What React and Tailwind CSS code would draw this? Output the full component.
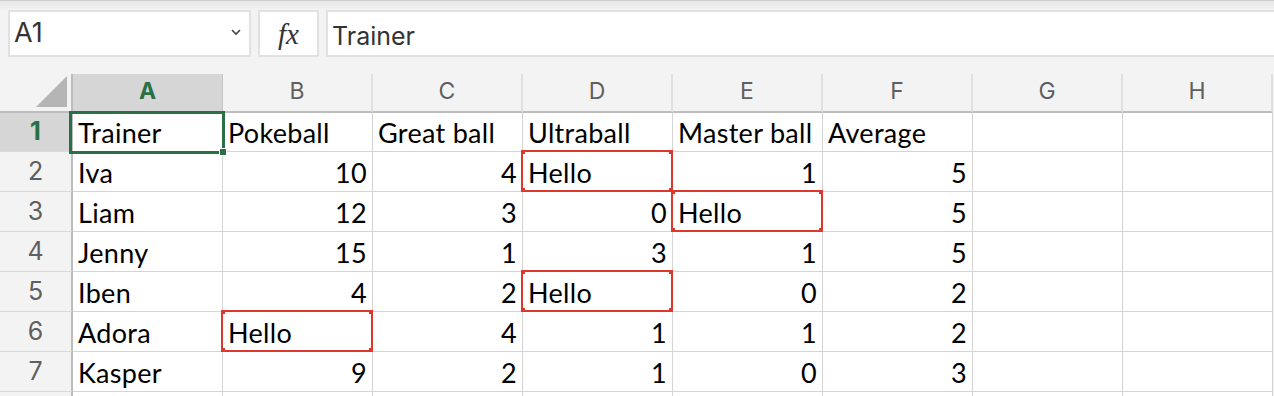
import React from "react";

const COLS = ["A", "B", "C", "D", "E", "F", "G", "H"];
const DATA = [
  ["Trainer", "Pokeball", "Great ball", "Ultraball", "Master ball", "Average", "", ""],
  ["Iva", 10, 4, "Hello", 1, 5, "", ""],
  ["Liam", 12, 3, 0, "Hello", 5, "", ""],
  ["Jenny", 15, 1, 3, 1, 5, "", ""],
  ["Iben", 4, 2, "Hello", 0, 2, "", ""],
  ["Adora", "Hello", 4, 1, 1, 2, "", ""],
  ["Kasper", 9, 2, 1, 0, 3, "", ""],
  ["", "", "", "", "", "", "", ""],
];
const RED = { "2-3": true, "3-4": true, "5-3": true, "6-1": true };

function RedBox() {
  return (
    <div className="pointer-events-none absolute -left-[2px] -top-[2px] -right-[1px] -bottom-[1px] z-10 border-2 border-[#e0372c]">
      <div className="absolute -left-[2px] -top-[2px] h-[4px] w-[4px] bg-[#e0372c]" />
      <div className="absolute -right-[2px] -top-[2px] h-[4px] w-[4px] bg-[#e0372c]" />
      <div className="absolute -left-[2px] -bottom-[2px] h-[4px] w-[4px] bg-[#e0372c]" />
      <div className="absolute -right-[2px] -bottom-[2px] h-[4px] w-[4px] bg-[#e0372c]" />
    </div>
  );
}

export default function App() {
  return (
    <div className="h-[396px] w-[1274px] overflow-hidden bg-[#f3f3f3] font-['Inter',sans-serif]">
      {/* top strip */}
      <div className="h-[10px] border-t border-[#cfcfcf] bg-gradient-to-b from-[#e6e6e6] to-[#f3f3f3]" />
      {/* formula bar */}
      <div className="flex h-[47px] gap-[7px] pl-[8px]">
        <div className="relative flex w-[243px] items-center border-2 border-[#e1e1e1] bg-white pl-[4px] text-[27px] text-[#333]">
          A1
          <svg className="absolute right-[8px] top-[17px]" width="10" height="7" viewBox="0 0 10 7">
            <polyline points="1,1 5,5 9,1" fill="none" stroke="#444" strokeWidth="1.6" />
          </svg>
        </div>
        <div className="flex w-[61px] items-center justify-center border-2 border-[#e1e1e1] bg-white pt-[2px] font-['Liberation_Serif',serif] text-[29px] italic text-[#333]">
          fx
        </div>
        <div className="flex flex-1 items-center border-2 border-r-0 border-[#e1e1e1] bg-white pl-[4px] pt-[7px] text-[25px] text-[#333]">
          Trainer
        </div>
      </div>
      <div className="h-[17px]" />
      {/* grid */}
      <div className="grid grid-cols-[73px_repeat(8,150px)]">
        {/* header row */}
        <div className="relative h-[39px] border-b-2 border-r-2 border-[#bdbdbd] bg-[#f3f3f3]">
          <svg className="absolute left-[36px] top-[2px]" width="31" height="31" viewBox="0 0 31 31">
            <polygon points="0,31 31,0 31,31" fill="#b5b5b5" />
          </svg>
        </div>
        {COLS.map((c, i) =>
          i === 0 ? (
            <div
              key={c}
              className="flex h-[39px] items-center justify-center border-b-2 border-r border-b-[#2a6f45] border-r-[#c4c4c4] bg-[#d6d6d6] pb-[3px] text-[23px] font-bold text-[#2a6f45]"
            >
              {c}
            </div>
          ) : (
            <div
              key={c}
              className="flex h-[39px] items-center justify-center border-b-2 border-r-2 border-b-[#bdbdbd] border-r-[#e0e0e0] bg-[#f3f3f3] pb-[3px] text-[23px] text-[#5f5f5f]"
            >
              {c}
            </div>
          )
        )}
        {/* data rows */}
        {DATA.map((row, r) => {
          const rn = r + 1;
          const h = rn === 1 ? "h-[39px]" : "h-[40px]";
          return (
            <React.Fragment key={rn}>
              <div
                className={`${h} flex items-center justify-center border-b border-r-2 border-b-[#dadada] border-r-[#bdbdbd] text-[25px] ${
                  rn === 1 ? "bg-[#d6d6d6] font-bold text-[#2a6f45]" : "bg-[#f3f3f3] text-[#5f5f5f]"
                }`}
              >
                {rn < 8 ? rn : ""}
              </div>
              {row.map((v, ci) => {
                const isNum = typeof v === "number";
                const red = RED[`${rn}-${ci}`];
                const sel = rn === 1 && ci === 0;
                return (
                  <div
                    key={ci}
                    className={`${h} relative flex items-center border-b border-r border-[#d4d4d4] bg-white px-[5px] font-['Lato',sans-serif] text-[27px] leading-[31px] tracking-[0.3px] text-black ${
                      isNum ? "justify-end" : "justify-start"
                    }`}
                  >
                    <span className="pt-[1px]">{v}</span>
                    {red && <RedBox />}
                    {sel && (
                      <div className="pointer-events-none absolute -left-[4px] -top-[2px] -right-[3px] -bottom-[3px] z-20 border-[3px] border-[#2a6f45]">
                        <div className="absolute -right-[5px] -bottom-[5px] h-[8px] w-[8px] border border-white bg-[#2a6f45]" />
                      </div>
                    )}
                  </div>
                );
              })}
            </React.Fragment>
          );
        })}
      </div>
    </div>
  );
}
